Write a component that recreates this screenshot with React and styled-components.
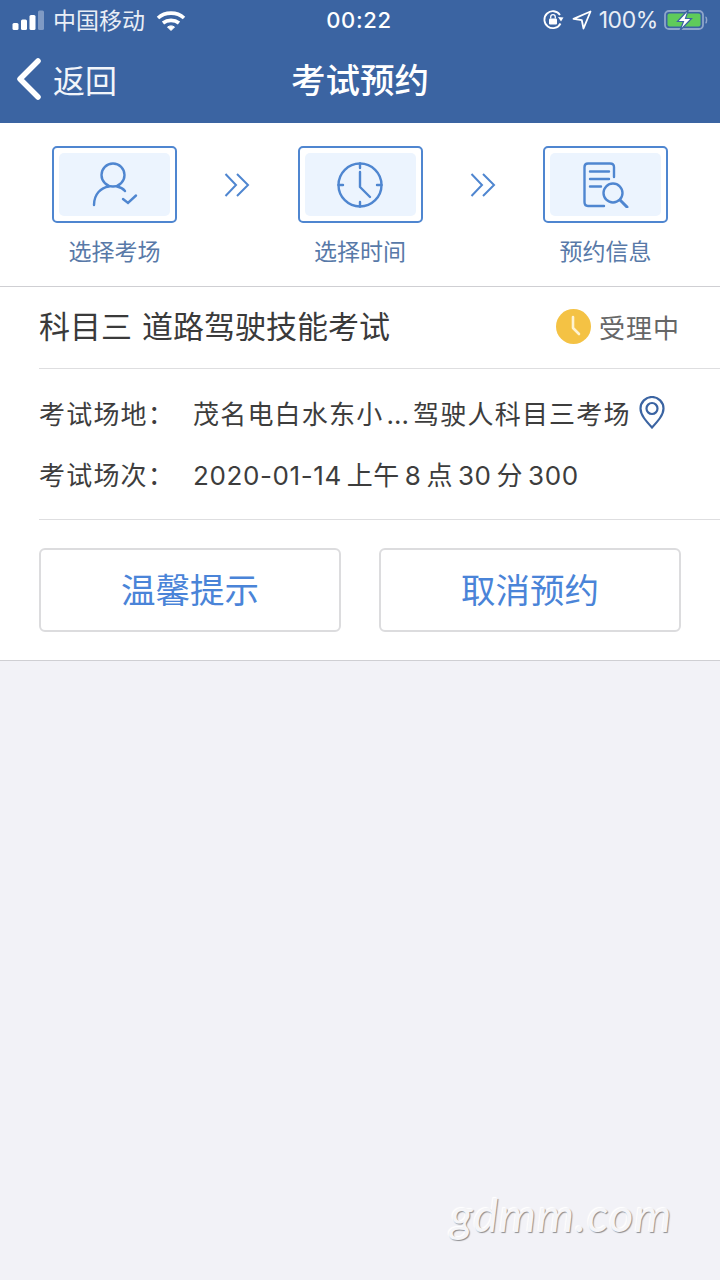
import React from "react";
import styled, { createGlobalStyle } from "styled-components";

const FONT = `"Noto Sans CJK SC", "Noto Sans", sans-serif`;
const LATIN_FONT = `"Inter", "Noto Sans CJK SC", sans-serif`;

const GlobalStyle = createGlobalStyle`
  html, body {
    margin: 0;
    padding: 0;
    background: #f2f2f7;
    font-family: ${FONT};
  }
  * {
    box-sizing: border-box;
  }
`;

const Page = styled.div`
  position: relative;
  width: 720px;
  height: 1280px;
  overflow: hidden;
  background: #f2f2f7;
`;

const Header = styled.header`
  height: 123px;
  background: #3b64a2;
  color: #fff;
  display: flex;
  flex-direction: column;
`;

const StatusBar = styled.div`
  height: 40px;
  padding: 0 12px;
  display: grid;
  grid-template-columns: 1fr auto 1fr;
  align-items: center;
`;

const StatusSide = styled.div`
  display: flex;
  align-items: center;
  justify-content: ${(p) => (p.$end ? "flex-end" : "flex-start")};
  gap: ${(p) => (p.$end ? "6px" : "8px")};
`;

const Carrier = styled.span`
  font-size: 23px;
  line-height: 40px;
  color: #e9eef6;
  margin: -3px 3px 0 0;
`;

const Clock = styled.span`
  font-family: ${LATIN_FONT};
  font-size: 22px;
  font-weight: 500;
  letter-spacing: 0.7px;
  margin-left: -2px;
`;

const Battery = styled.span`
  font-family: ${LATIN_FONT};
  font-size: 23px;
  letter-spacing: -0.4px;
  color: #e9eef6;
  margin-left: 1px;
`;

const NavBar = styled.div`
  position: relative;
  height: 83px;
  display: flex;
  align-items: center;
  justify-content: center;
  padding-bottom: 8px;
`;

const BackLink = styled.div`
  position: absolute;
  left: 16px;
  top: 18px;
  display: flex;
  align-items: center;
  gap: 11px;
  font-size: 32px;
  line-height: 42px;
  color: #f2f5fa;
`;

const Title = styled.h1`
  margin: 0;
  font-size: 34.5px;
  font-weight: 500;
  line-height: 44px;
`;

const Steps = styled.section`
  height: 164px;
  background: #fff;
  border-bottom: 1px solid #cfcfd3;
  padding: 23px 52px 0;
  display: flex;
  justify-content: space-between;
`;

const Step = styled.div`
  width: 125px;
  display: flex;
  flex-direction: column;
  align-items: center;
`;

const StepBox = styled.div`
  width: 125px;
  height: 77px;
  padding: 5px;
  border: 2px solid #4f86d0;
  border-radius: 5px;
  background: #fff;
`;

const StepFill = styled.div`
  height: 100%;
  border-radius: 5px;
  background: #ecf4fe;
  display: flex;
  align-items: center;
  justify-content: center;
`;

const StepLabel = styled.span`
  margin-top: 12px;
  font-size: 23px;
  line-height: 30px;
  color: #5879a8;
`;

const Chevrons = styled.div`
  height: 77px;
  display: flex;
  align-items: center;
`;

const Card = styled.section`
  background: #fff;
  border-bottom: 1px solid #cfcfd3;
  padding-left: 39px;
`;

const CardHead = styled.div`
  height: 82px;
  border-bottom: 1px solid #dedee0;
  padding-right: 40px;
  display: flex;
  align-items: center;
  justify-content: space-between;
`;

const ExamName = styled.h2`
  margin: 0;
  font-size: 31px;
  font-weight: 400;
  line-height: 44px;
  word-spacing: 3px;
  color: #3a3a3a;
  position: relative;
  top: -3px;
`;

const StatusTag = styled.div`
  display: flex;
  align-items: center;
  gap: 8px;
  font-size: 26px;
  color: #666;
  letter-spacing: 1px;
  position: relative;
  top: -1px;
`;

const Info = styled.div`
  height: 151px;
  border-bottom: 1px solid #dedee0;
  padding-top: 13px;
`;

const InfoRow = styled.div`
  height: 61px;
  display: flex;
  align-items: center;
  font-family: ${LATIN_FONT};
  font-size: 26px;
  letter-spacing: 1.2px;
  color: #3d3d3d;
  white-space: nowrap;
`;

const InfoLabel = styled.span`
  width: 154px;
  flex: none;
`;

const InfoValue = styled.span`
  letter-spacing: ${(p) => (p.$tight ? "0.6px" : "1.2px")};
  word-spacing: ${(p) => (p.$tight ? "-3px" : "0")};
`;

const Ellipsis = styled.span`
  margin: 0 3px;
`;

const PinMark = styled.span`
  display: flex;
  margin-left: 8px;
`;

const Actions = styled.div`
  height: 140px;
  padding: 28px 39px 0 0;
  display: flex;
  justify-content: space-between;
`;

const ActionButton = styled.button`
  width: 302px;
  height: 84px;
  padding: 0 0 4px;
  background: #fff;
  border: 2px solid #dcdcde;
  border-radius: 6px;
  font-family: ${FONT};
  font-size: 34.5px;
  color: #4a84d8;
`;

const Watermark = styled.div`
  position: absolute;
  left: 450px;
  top: 1184px;
  font-family: "Lato", "Noto Sans", sans-serif;
  font-style: italic;
  font-size: 47px;
  font-weight: 400;
  line-height: 60px;
  letter-spacing: 1px;
  color: #f5f5f8;
  text-shadow: 1px 1px 1px #8d8d90, -1px -1px 1px #fff;
`;

const SignalIcon = () => (
  <svg width="33" height="22" viewBox="0 0 33 22">
    <rect x="0.5" y="14" width="6" height="7" rx="1.5" fill="#fff" />
    <rect x="9" y="10.5" width="6" height="10.5" rx="1.5" fill="#fff" />
    <rect x="17.5" y="6" width="6" height="15" rx="1.5" fill="#fff" />
    <rect x="26" y="1.5" width="6" height="19.5" rx="1.5" fill="#7f9ac4" />
  </svg>
);

const WifiIcon = () => (
  <svg width="30" height="22" viewBox="0 0 30 22" fill="none" stroke="#fff" strokeWidth="3.6">
    <path d="M2 9 C9 2.5 21 2.5 28 9" />
    <path d="M7 14 C11.500 10.500 18.500 10.500 23 14" />
    <path d="M11.500 18 L15 21.500 L18.500 18 C16.500 16.500 13.500 16.500 11.500 18Z" fill="#fff" strokeWidth="1" />
  </svg>
);

const RotationLockIcon = () => (
  <svg width="24" height="22" viewBox="0 0 24 22" fill="none" stroke="#fff" strokeWidth="1.8">
    <path d="M18.500 14.500 A8.500 8.500 0 1 1 18 6" />
    <path d="M16 8 L21.500 8.500 L19 12.500Z" fill="#fff" stroke="none" />
    <rect x="7" y="9.500" width="8" height="6" rx="1" fill="#fff" stroke="none" />
    <path d="M8.700 9.500 V8 a2.300 2.300 0 0 1 4.600 0 V9.500" strokeWidth="1.300" />
  </svg>
);

const LocationArrowIcon = () => (
  <svg width="20" height="20" viewBox="0 0 20 20" fill="none" stroke="#fff" strokeWidth="1.8" strokeLinejoin="round">
    <path d="M18.500 1.500 L1.500 8.800 L9.800 10.200 L11.500 18.500Z" />
  </svg>
);

const BatteryIcon = () => (
  <svg width="44" height="22" viewBox="0 0 44 22" fill="none">
    <rect x="1" y="2" width="38" height="18" rx="4" stroke="#8ea5cb" strokeWidth="1.800" />
    <rect x="3.500" y="4.500" width="33" height="13" rx="2" fill="#5fcb5a" />
    <path d="M41.500 8 C43 8.500 43 13.500 41.500 14" stroke="#8ea5cb" strokeWidth="1.500" />
    <path d="M24.500 0.500 L13.500 12.500 H19.500 L16 21.500 L27.500 9.500 H21.500Z" fill="#fff" stroke="#3b64a2" strokeWidth="1.200" />
  </svg>
);

const BackIcon = () => (
  <svg width="26" height="42" viewBox="0 0 26 42" fill="none" stroke="#fff" strokeWidth="5.500" strokeLinecap="round" strokeLinejoin="round">
    <path d="M22 3 L4 21 L22 39" />
  </svg>
);

const PersonIcon = () => (
  <svg width="46" height="46" viewBox="0 0 46 46" fill="none" stroke="#4f86d0" strokeWidth="2.400" strokeLinecap="round">
    <circle cx="21" cy="13" r="11.500" />
    <path d="M2 43 C2 32 9 25.500 17 24.500" />
    <path d="M25 24.500 C28 25 31 26.500 33 29" />
    <path d="M31 37 L36 41 L44 33.500" />
  </svg>
);

const ClockIcon = () => (
  <svg width="46" height="46" viewBox="0 0 46 46" fill="none" stroke="#4f86d0" strokeWidth="2.400" strokeLinecap="round" strokeLinejoin="round">
    <circle cx="23" cy="23" r="21.500" />
    <path d="M23 1.500 V6 M23 40 V44.500 M1.500 23 H6 M40 23 H44.500" />
    <path d="M23 10 V25 L33 35" />
  </svg>
);

const DocSearchIcon = () => (
  <svg width="46" height="46" viewBox="0 0 46 46" fill="none" stroke="#4f86d0" strokeWidth="2.400" strokeLinecap="round">
    <path d="M31 15 V5 Q31 1.500 27 1.500 H5 Q1.500 1.500 1.500 5 V40 Q1.500 44 5 44 H21" />
    <path d="M7 9.500 H26 M7 17 H26 M7 24.500 H18" />
    <circle cx="30" cy="31" r="9.500" />
    <path d="M37 38 L44 45" strokeWidth="3" />
  </svg>
);

const ChevronsIcon = () => (
  <svg width="26" height="26" viewBox="0 0 26 26" fill="none" stroke="#4f86d0" strokeWidth="2">
    <path d="M1.500 2 L12 13 L1.500 24" />
    <path d="M13 2 L24 13 L13 24" />
  </svg>
);

const PendingIcon = () => (
  <svg width="35" height="35" viewBox="0 0 35 35">
    <circle cx="17.500" cy="17.500" r="17.500" fill="#f4c244" />
    <path d="M17 8 V19 L23 25" fill="none" stroke="#fff3d0" strokeWidth="2.600" strokeLinecap="round" strokeLinejoin="round" />
  </svg>
);

const PinIcon = () => (
  <svg width="26" height="33" viewBox="0 0 26 33" fill="none" stroke="#3b64a2" strokeWidth="2.200">
    <path d="M13 31.500 C7 25 1.500 19 1.500 12.500 A11.500 11.500 0 0 1 24.500 12.500 C24.500 19 19 25 13 31.500Z" />
    <circle cx="13" cy="12.500" r="5.500" />
  </svg>
);

const STEPS = [
  { label: "选择考场", Icon: PersonIcon },
  { label: "选择时间", Icon: ClockIcon },
  { label: "预约信息", Icon: DocSearchIcon },
];

const App = () => {
  return (
    <Page>
      <GlobalStyle />
      <Header>
        <StatusBar>
          <StatusSide>
            <SignalIcon />
            <Carrier>中国移动</Carrier>
            <WifiIcon />
          </StatusSide>
          <Clock>00:22</Clock>
          <StatusSide $end>
            <RotationLockIcon />
            <LocationArrowIcon />
            <Battery>100%</Battery>
            <BatteryIcon />
          </StatusSide>
        </StatusBar>
        <NavBar>
          <BackLink>
            <BackIcon />
            返回
          </BackLink>
          <Title>考试预约</Title>
        </NavBar>
      </Header>

      <Steps>
        {STEPS.map(({ label, Icon }, i) => (
          <React.Fragment key={label}>
            {i > 0 && (
              <Chevrons>
                <ChevronsIcon />
              </Chevrons>
            )}
            <Step>
              <StepBox>
                <StepFill>
                  <Icon />
                </StepFill>
              </StepBox>
              <StepLabel>{label}</StepLabel>
            </Step>
          </React.Fragment>
        ))}
      </Steps>

      <Card>
        <CardHead>
          <ExamName>科目三 道路驾驶技能考试</ExamName>
          <StatusTag>
            <PendingIcon />
            受理中
          </StatusTag>
        </CardHead>
        <Info>
          <InfoRow>
            <InfoLabel>考试场地：</InfoLabel>
            <InfoValue>
              茂名电白水东小<Ellipsis>…</Ellipsis>驾驶人科目三考场
            </InfoValue>
            <PinMark>
              <PinIcon />
            </PinMark>
          </InfoRow>
          <InfoRow>
            <InfoLabel>考试场次：</InfoLabel>
            <InfoValue $tight>2020-01-14 上午 8 点 30 分 300</InfoValue>
          </InfoRow>
        </Info>
        <Actions>
          <ActionButton>温馨提示</ActionButton>
          <ActionButton>取消预约</ActionButton>
        </Actions>
      </Card>

      <Watermark>gdmm.com</Watermark>
    </Page>
  );
};

export default App;
